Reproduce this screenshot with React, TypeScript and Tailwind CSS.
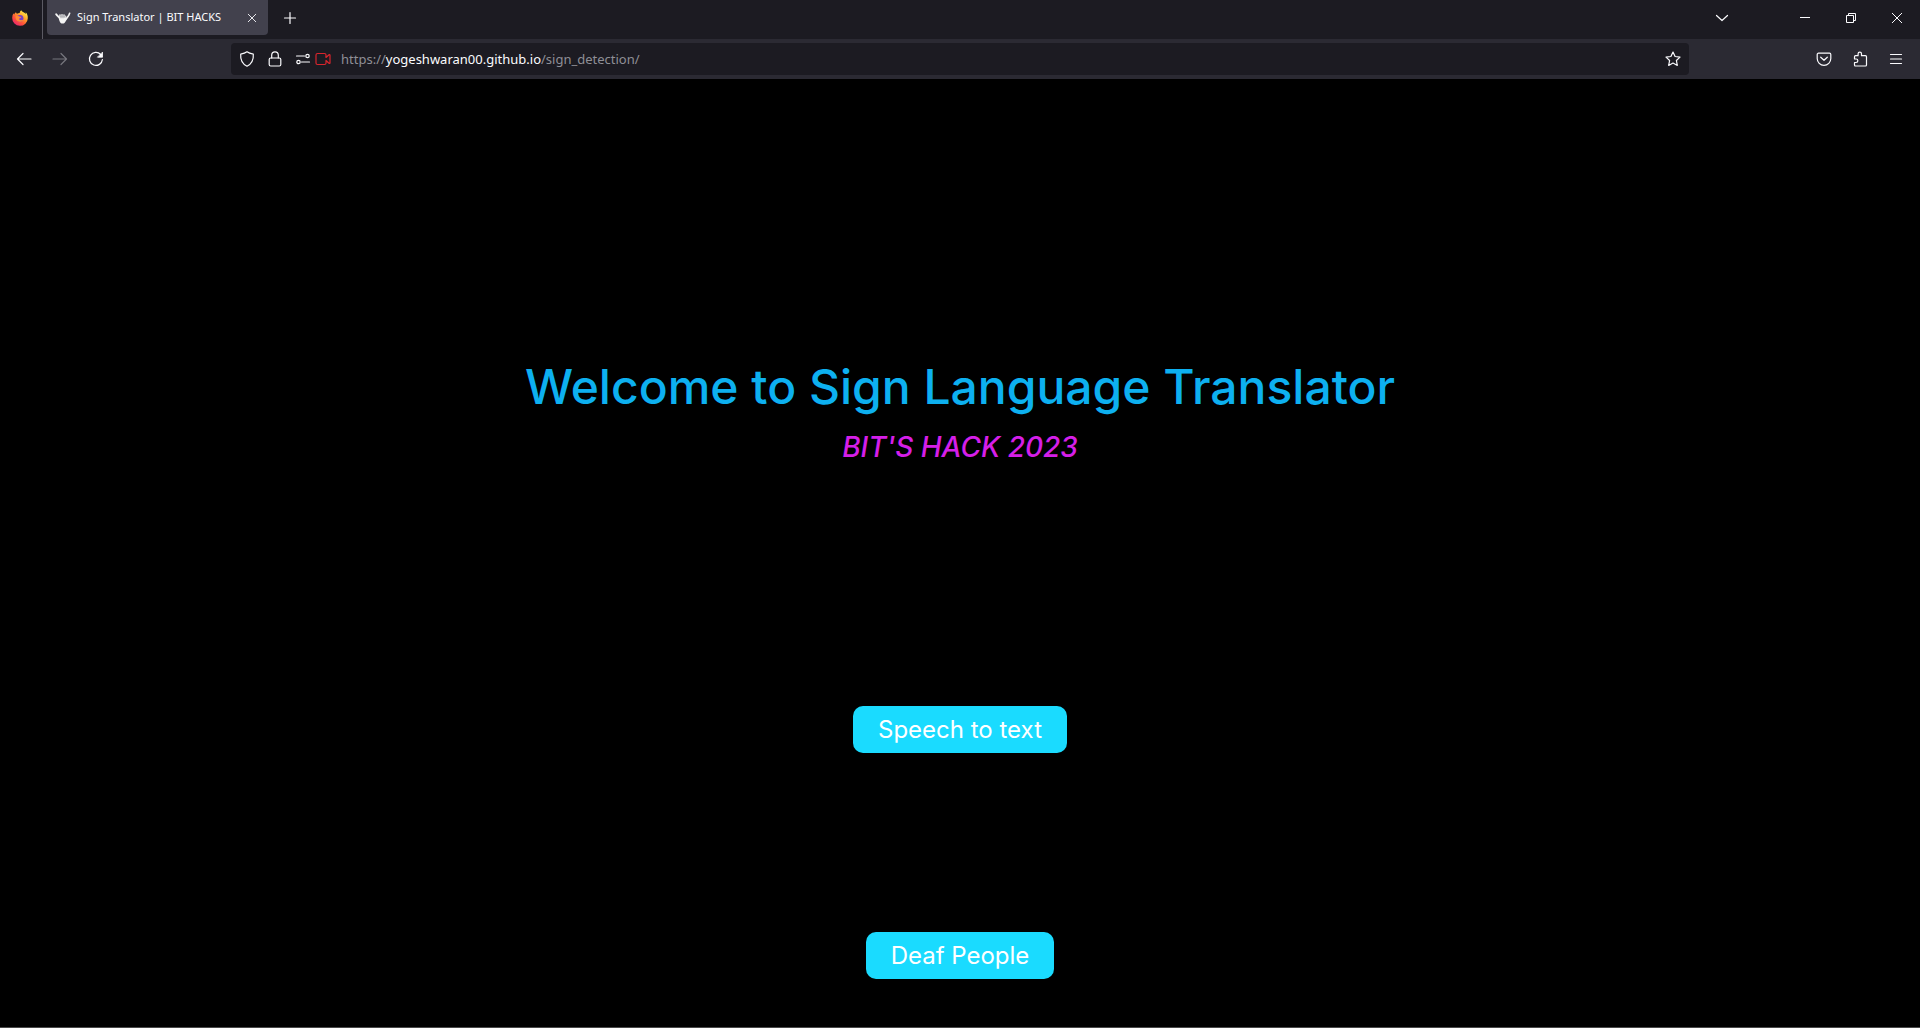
import type { ReactNode } from 'react';

type IconProps = { children: ReactNode; className?: string };

function Icon({ children, className = 'size-4' }: IconProps) {
  return (
    <svg
      viewBox="0 0 16 16"
      className={className}
      fill="none"
      stroke="currentColor"
      strokeWidth="1.2"
      strokeLinecap="round"
      strokeLinejoin="round"
      aria-hidden="true"
    >
      {children}
    </svg>
  );
}

function IconButton({ label, className, children }: { label: string; className: string; children: ReactNode }) {
  return (
    <button type="button" aria-label={label} className={`flex shrink-0 items-center justify-center ${className}`}>
      {children}
    </button>
  );
}

function FirefoxLogo() {
  return (
    <svg viewBox="0 0 16 16" className="size-4" aria-hidden="true">
      <defs>
        <linearGradient id="flame" x1="0.85" y1="0.1" x2="0.2" y2="0.95">
          <stop offset="0" stopColor="#fff04a" />
          <stop offset="0.35" stopColor="#ffa02c" />
          <stop offset="0.65" stopColor="#ff5538" />
          <stop offset="1" stopColor="#e8246f" />
        </linearGradient>
      </defs>
      <path
        d="M9.2.3c-1 .8-1.5 1.9-1.5 2.7-1.2 0-2 .3-2.7.8-.6-.4-.9-1-1-1.6C3 2.7 2.5 3.6 2.3 4.4 1.800 4.2 1.5 3.7 1.4 3.2.6 4.6.2 6.2.2 7.9a7.800 7.800 0 0 0 15.6.3c.1-2.500-.7-4.600-2.200-5.900.2.600.3 1.200.2 1.800C12.900 2.300 10.100 2.400 9.200.3Z"
        fill="url(#flame)"
      />
      <circle cx="8" cy="8.300" r="3.400" fill="#7542c8" />
      <path d="M3.600 6.300c1.300-.8 2.600-.6 3.700.1.700.4 1.500.3 2 .5-.3 1-1.400 1.100-2 1.600-.5.500-.2 1.300.8 1.600 1.300.4 2.300-.5 3.300-.4-.8 1.500-2.100 2.200-3.700 2.100-2.700-.2-4.500-2.700-4.100-5.500Z" fill="#ff8a35" />
    </svg>
  );
}

function HandLogo() {
  return (
    <svg viewBox="0 0 16 12" className="h-3 w-4 shrink-0" aria-hidden="true">
      <path d="M4 5.500h6.500l1 1.200c-.4 2-1 3-2 4.200-1 .9-2.900.9-3.900 0C4.600 9.800 4.200 8.500 4 7Z" fill="#f4f4f4" />
      <g stroke="#f4f4f4" strokeLinecap="round" fill="none">
        <path d="M1.200 2.300C2.300 3.900 3.800 4.700 5 6.700" strokeWidth="1.900" />
        <path d="M5 3v4M7 2.700v4M9 3v4" strokeWidth="1.500" />
        <path d="M10.600 4.200v2.500" strokeWidth="1.200" />
        <path d="M14.600 1.400c-.6 2.300-2.400 3.900-4 6.400" strokeWidth="1.700" />
      </g>
      <path d="M6 3.500v2.800M8 3.500v2.800M10 3.800v2" stroke="#77757f" strokeWidth=".5" fill="none" />
    </svg>
  );
}

function TabStrip() {
  return (
    <header className="flex h-[39px] items-start bg-[#1c1b22]">
      <div className="flex h-full w-[43px] shrink-0 items-center border-r border-[#5b5a63] pb-1 pl-3">
        <FirefoxLogo />
      </div>
      <div className="ml-1 flex h-[35px] w-[221px] shrink-0 items-center rounded-b-[4px] bg-[#42414d] pl-2">
        <HandLogo />
        <span className="ml-[6px] flex-1 whitespace-nowrap text-[11px]">Sign Translator | BIT HACKS</span>
        <IconButton label="Close tab" className="mr-1 size-6">
          <Icon className="size-3"><path d="M3 3l10 10M13 3 3 13" /></Icon>
        </IconButton>
      </div>
      <IconButton label="New tab" className="ml-1 h-[35px] w-9">
        <Icon><path d="M8 2.500v11M2.500 8h11" /></Icon>
      </IconButton>
      <div className="ml-auto flex h-[35px] items-center">
        <IconButton label="List all tabs" className="mr-[42px] h-full w-9">
          <Icon><path d="M2.500 5.500 8 10.500l5.500-5" /></Icon>
        </IconButton>
        <IconButton label="Minimize" className="h-full w-[46px]">
          <svg viewBox="0 0 10 10" className="size-[10px]" aria-hidden="true"><path d="M0 4.500h10" stroke="currentColor" /></svg>
        </IconButton>
        <IconButton label="Restore" className="h-full w-[46px]">
          <svg viewBox="0 0 10 10" className="size-[10px]" fill="none" stroke="currentColor" aria-hidden="true"><path d="M.5 2.500h7v7h-7zM2.500 2.500v-2h7v7h-2" /></svg>
        </IconButton>
        <IconButton label="Close" className="h-full w-[46px]">
          <svg viewBox="0 0 10 10" className="size-[10px]" stroke="currentColor" aria-hidden="true"><path d="m0 0 10 10M10 0 0 10" /></svg>
        </IconButton>
      </div>
    </header>
  );
}

function AddressBar() {
  return (
    <div className="flex h-8 flex-1 items-center rounded bg-[#1c1b22] pl-2">
      <div className="flex items-center">
        <Icon><path d="M8 .8c1.600 1.200 3.800 1.900 6.300 2.300.4 5.200-1.200 9.600-6.300 12.100C2.900 12.700 1.300 8.300 1.700 3.100 4.200 2.700 6.400 2 8 .8Z" /></Icon>
        <Icon className="ml-3 size-4">
          <rect x="2.200" y="7" width="11.600" height="8" rx="1.500" />
          <path d="M4.700 7V4.200a3.300 3.300 0 0 1 6.600 0V7" />
        </Icon>
        <Icon className="ml-3 size-4">
          <path d="M1.500 5h8M6.500 11h8" />
          <circle cx="12.500" cy="5" r="1.700" />
          <circle cx="3.500" cy="11" r="1.700" />
        </Icon>
        <Icon className="ml-1 size-4 text-[#d7262d]">
          <path d="M2.500 2.500h7A1.500 1.500 0 0 1 11 4v2.500l3-2.800a.6.600 0 0 1 1 .4v7.800a.6.600 0 0 1-1 .4l-3-2.800V12a1.500 1.500 0 0 1-1.500 1.500h-7A1.500 1.500 0 0 1 1 12V4a1.500 1.500 0 0 1 1.500-1.500Z" />
        </Icon>
      </div>
      <a href="https://yogeshwaran00.github.io/sign_detection/" className="ml-[10px] flex-1 whitespace-nowrap pt-0.5 text-[13px] text-[#8f8f96]">
        https://<span className="text-[#fbfbfe]">yogeshwaran00.github.io</span>/sign_detection/
      </a>
      <IconButton label="Bookmark this page" className="h-full w-8">
        <Icon><path d="m8 1 2.100 4.500 4.900.6-3.600 3.400.9 4.900L8 12l-4.300 2.400.9-4.900L1 6.100l4.900-.6Z" /></Icon>
      </IconButton>
    </div>
  );
}

function Toolbar() {
  return (
    <nav aria-label="Navigation" className="flex h-10 items-center bg-[#2b2a33] px-[6px]">
      <IconButton label="Back" className="h-8 w-9">
        <Icon><path d="M15 8H1.500M7 2.500 1.500 8 7 13.500" /></Icon>
      </IconButton>
      <IconButton label="Forward" className="h-8 w-9 text-[#77767e]">
        <Icon><path d="M1 8h13.500M9 2.500 14.500 8 9 13.500" /></Icon>
      </IconButton>
      <IconButton label="Reload" className="h-8 w-9">
        <Icon><path d="M14.400 8.500A6.500 6.500 0 1 1 12.700 3.500" /><path d="M14.500 1.500v4.700H9.800Z" fill="currentColor" strokeWidth=".8" /></Icon>
      </IconButton>
      <div className="w-[117px] shrink" />
      <AddressBar />
      <div className="w-[117px] shrink" />
      <IconButton label="Save to Pocket" className="h-8 w-9">
        <Icon><path d="M2.500 2.200h11a1.300 1.300 0 0 1 1.300 1.300V7.500a6.800 6.800 0 0 1-13.600 0V3.500a1.300 1.300 0 0 1 1.300-1.300ZM4.700 6.200 8 9.300l3.300-3.100" /></Icon>
      </IconButton>
      <IconButton label="Extensions" className="h-8 w-9">
        <Icon><path d="M2.500 8V5.700a1 1 0 0 1 1-1h2.600V2.800a1.700 1.700 0 0 1 3.400 0v1.900h4a1 1 0 0 1 1 1V14a1 1 0 0 1-1 1h-10a1 1 0 0 1-1-1v-2.500h1.600a1.700 1.700 0 0 0 0-3.500Z" /></Icon>
      </IconButton>
      <IconButton label="Open application menu" className="h-8 w-9">
        <Icon><path d="M2.500 3.500h11M2.500 8h11M2.500 12.500h11" /></Icon>
      </IconButton>
    </nav>
  );
}

export default function App() {
  return (
    <div className="flex min-h-screen flex-col bg-black font-['Noto_Sans',sans-serif] text-[#fbfbfe]">
      <TabStrip />
      <Toolbar />
      <main className="flex flex-1 flex-col items-center border-b border-[#4a4a4a] px-4 pb-12 pt-[274px] text-center font-['Inter',sans-serif]">
        <h1 className="text-[48px] font-medium leading-[68px] text-[#0db0f0]">Welcome to Sign Language Translator</h1>
        <p className="pt-1 text-[28px] font-medium italic leading-[44px] text-[#d51fe8]">BIT'S HACK 2023</p>
        <button type="button" className="mt-[237px] h-[47px] rounded-[10px] bg-[#1adbff] px-[25px] text-[24px] text-white">
          Speech to text
        </button>
        <button type="button" className="mt-[179px] h-[47px] rounded-[10px] bg-[#1adbff] px-[25px] text-[24px] text-white">
          Deaf People
        </button>
      </main>
    </div>
  );
}
